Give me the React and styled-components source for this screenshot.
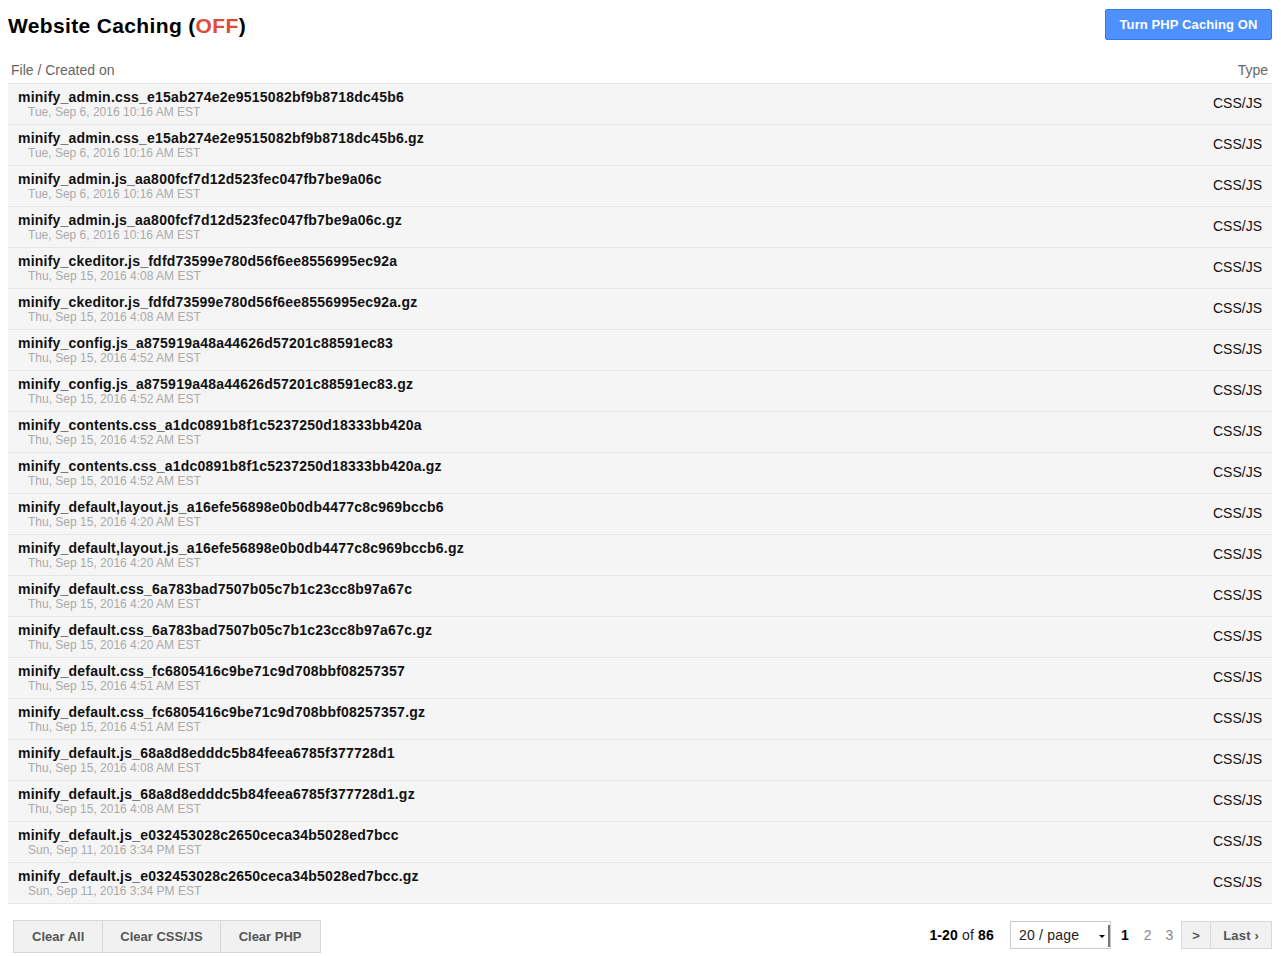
import React from 'react';
import styled, { createGlobalStyle } from 'styled-components';

const GlobalStyle = createGlobalStyle`
  body {
    margin: 8px;
    font-family: "Liberation Sans", Arial, sans-serif;
    color: #222;
    background: #fff;
  }
`;

const Page = styled.div`
  display: flex;
  flex-direction: column;
`;

const TopBar = styled.div`
  display: flex;
  justify-content: space-between;
  align-items: flex-start;
  height: 47px;
`;

const Title = styled.h1`
  margin: 6px 0 0 0;
  font-size: 21px;
  font-weight: bold;
  color: #000;
  letter-spacing: 0.35px;
`;

const Off = styled.span`
  color: #dd4b39;
`;

const PrimaryButton = styled.button`
  margin-top: 1px;
  margin-right: 1px;
  height: 31px;
  width: 167px;
  background: #4d90fe;
  border: 1px solid #3079ed;
  border-radius: 2px;
  color: #fff;
  font-family: inherit;
  font-weight: bold;
  font-size: 13px;
  letter-spacing: 0.1px;
`;

const Table = styled.div`
  display: flex;
  flex-direction: column;
  margin-right: 1px;
`;

const HeadRow = styled.div`
  display: flex;
  justify-content: space-between;
  align-items: center;
  height: 28px;
  padding: 0 4px 0 3px;
  font-size: 14px;
  color: #666;
  border-bottom: 1px solid #e5e5e5;
  div {
    margin-top: 2px;
  }
`;

const Row = styled.div`
  display: flex;
  justify-content: space-between;
  align-items: center;
  height: 40px;
  background: #f5f5f5;
  border-bottom: 1px solid #e5e5e5;
  padding: 0 10px;
`;

const FileCell = styled.div`
  display: flex;
  flex-direction: column;
  margin-top: -1px;
`;

const FileName = styled.div`
  font-size: 14px;
  font-weight: bold;
  line-height: 16px;
  color: #111;
  letter-spacing: 0.22px;
`;

const FileDate = styled.div`
  font-size: 12px;
  line-height: 14px;
  color: #aaa;
  padding-left: 10px;
`;

const TypeCell = styled.div`
  font-size: 14px;
  color: #111;
  margin-top: -3px;
`;

const Footer = styled.div`
  display: flex;
  justify-content: space-between;
  align-items: center;
  margin-top: 16px;
  padding-left: 5px;
  margin-right: 1px;
`;

const ButtonGroup = styled.div`
  display: flex;
`;

const GrayButton = styled.button`
  height: 33px;
  padding: 0 ${p => p.$pad}px;
  background: #f1f1f1;
  border: 1px solid #d8d8d8;
  margin-left: -1px;
  color: #555;
  font-family: inherit;
  font-weight: bold;
  font-size: 13px;
  &:first-child { margin-left: 0; }
`;

const Pager = styled.div`
  display: flex;
  align-items: center;
  font-size: 14px;
  margin-top: -3px;
`;

const Count = styled.span`
  color: #222;
  margin-right: 16px;
  letter-spacing: 0.15px;
  b { color: #000; }
`;

const Select = styled.div`
  position: relative;
  width: 101px;
  height: 28px;
  box-sizing: border-box;
  border: 1px solid #ccc;
  display: flex;
  align-items: center;
  padding-left: 8px;
  font-size: 14px;
  color: #222;
  margin-right: 2px;
  letter-spacing: 0.2px;
`;

const Caret = styled.span`
  position: absolute;
  right: 0;
  top: 3px;
  bottom: 1px;
  width: 9px;
  border-right: 2px solid #777;
  display: flex;
  align-items: center;
  justify-content: flex-start;
  &::before {
    content: '';
    border-left: 3px solid transparent;
    border-right: 3px solid transparent;
    border-top: 3px solid #000;
  }
`;

const PageNum = styled.span`
  padding: 0 ${p => (p.$active ? 8 : 7)}px;
  font-weight: ${p => (p.$active ? 'bold' : 'normal')};
  color: ${p => (p.$active ? '#000' : '#888')};
`;

const NavGroup = styled.div`
  display: flex;
  margin-left: 1px;
`;

const NavButton = styled.button`
  height: 28px;
  padding: 0 ${p => p.$pad}px;
  background: #f1f1f1;
  border: 1px solid #d8d8d8;
  margin-left: -1px;
  color: #555;
  font-family: inherit;
  font-weight: bold;
  font-size: 13px;
  letter-spacing: 0.2px;
  &:first-child { margin-left: 0; }
`;

const files = [
  ['minify_admin.css_e15ab274e2e9515082bf9b8718dc45b6', 'Tue, Sep 6, 2016 10:16 AM EST'],
  ['minify_admin.css_e15ab274e2e9515082bf9b8718dc45b6.gz', 'Tue, Sep 6, 2016 10:16 AM EST'],
  ['minify_admin.js_aa800fcf7d12d523fec047fb7be9a06c', 'Tue, Sep 6, 2016 10:16 AM EST'],
  ['minify_admin.js_aa800fcf7d12d523fec047fb7be9a06c.gz', 'Tue, Sep 6, 2016 10:16 AM EST'],
  ['minify_ckeditor.js_fdfd73599e780d56f6ee8556995ec92a', 'Thu, Sep 15, 2016 4:08 AM EST'],
  ['minify_ckeditor.js_fdfd73599e780d56f6ee8556995ec92a.gz', 'Thu, Sep 15, 2016 4:08 AM EST'],
  ['minify_config.js_a875919a48a44626d57201c88591ec83', 'Thu, Sep 15, 2016 4:52 AM EST'],
  ['minify_config.js_a875919a48a44626d57201c88591ec83.gz', 'Thu, Sep 15, 2016 4:52 AM EST'],
  ['minify_contents.css_a1dc0891b8f1c5237250d18333bb420a', 'Thu, Sep 15, 2016 4:52 AM EST'],
  ['minify_contents.css_a1dc0891b8f1c5237250d18333bb420a.gz', 'Thu, Sep 15, 2016 4:52 AM EST'],
  ['minify_default,layout.js_a16efe56898e0b0db4477c8c969bccb6', 'Thu, Sep 15, 2016 4:20 AM EST'],
  ['minify_default,layout.js_a16efe56898e0b0db4477c8c969bccb6.gz', 'Thu, Sep 15, 2016 4:20 AM EST'],
  ['minify_default.css_6a783bad7507b05c7b1c23cc8b97a67c', 'Thu, Sep 15, 2016 4:20 AM EST'],
  ['minify_default.css_6a783bad7507b05c7b1c23cc8b97a67c.gz', 'Thu, Sep 15, 2016 4:20 AM EST'],
  ['minify_default.css_fc6805416c9be71c9d708bbf08257357', 'Thu, Sep 15, 2016 4:51 AM EST'],
  ['minify_default.css_fc6805416c9be71c9d708bbf08257357.gz', 'Thu, Sep 15, 2016 4:51 AM EST'],
  ['minify_default.js_68a8d8edddc5b84feea6785f377728d1', 'Thu, Sep 15, 2016 4:08 AM EST'],
  ['minify_default.js_68a8d8edddc5b84feea6785f377728d1.gz', 'Thu, Sep 15, 2016 4:08 AM EST'],
  ['minify_default.js_e032453028c2650ceca34b5028ed7bcc', 'Sun, Sep 11, 2016 3:34 PM EST'],
  ['minify_default.js_e032453028c2650ceca34b5028ed7bcc.gz', 'Sun, Sep 11, 2016 3:34 PM EST'],
];

export default function App() {
  return (
    <Page>
      <GlobalStyle />
      <TopBar>
        <Title>Website Caching (<Off>OFF</Off>)</Title>
        <PrimaryButton>Turn PHP Caching ON</PrimaryButton>
      </TopBar>
      <Table>
        <HeadRow>
          <div>File / Created on</div>
          <div>Type</div>
        </HeadRow>
        {files.map(([name, date]) => (
          <Row key={name}>
            <FileCell>
              <FileName>{name}</FileName>
              <FileDate>{date}</FileDate>
            </FileCell>
            <TypeCell>CSS/JS</TypeCell>
          </Row>
        ))}
      </Table>
      <Footer>
        <ButtonGroup>
          <GrayButton $pad={18}>Clear All</GrayButton>
          <GrayButton $pad={17}>Clear CSS/JS</GrayButton>
          <GrayButton $pad={18}>Clear PHP</GrayButton>
        </ButtonGroup>
        <Pager>
          <Count><b>1-20</b> of <b>86</b></Count>
          <Select>20 / page<Caret /></Select>
          <PageNum $active>1</PageNum>
          <PageNum>2</PageNum>
          <PageNum>3</PageNum>
          <NavGroup>
            <NavButton $pad={10}>&gt;</NavButton>
            <NavButton $pad={12}>Last ›</NavButton>
          </NavGroup>
        </Pager>
      </Footer>
    </Page>
  );
}
